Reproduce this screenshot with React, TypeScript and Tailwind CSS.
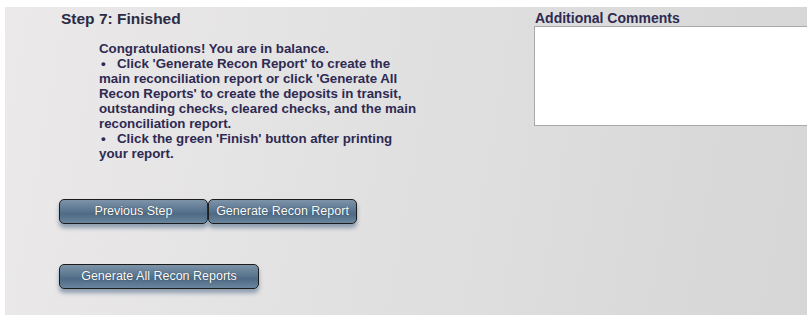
import React from 'react';

function NavButton({ label, width }: { label: string; width: string }) {
  return (
    <button
      className={`${width} h-[25px] rounded-[5px] border border-[#1c1c1c] bg-[linear-gradient(to_bottom,#7d93a8_0%,#5b7690_45%,#4e6a84_60%,#6a869e_100%)] text-[12.5px] text-white [text-shadow:0_0_1px_#1e2a38] shadow-[0_4px_4px_rgba(70,100,130,0.55)]`}
    >
      {label}
    </button>
  );
}

export default function App() {
  return (
    <div className="w-[807px] h-[317px] bg-white pt-[7px] pl-[5px] font-['Liberation_Sans',Arial,sans-serif]">
      <div className="flex h-[308px] bg-[linear-gradient(100deg,#ebe9ea_0%,#e3e2e3_40%,#d6d6d6_100%)] overflow-hidden">
        {/* left column */}
        <div className="w-[529px] shrink-0 pl-[56px]">
          <h2 className="mt-[3px] text-[15.5px] font-bold leading-[18px] text-[#2b2b45]">Step 7: Finished</h2>
          <div className="ml-[38px] mt-[13px] w-[320px] text-[13.3px] font-bold leading-[15px] text-[#2e2a52]">
            <p>Congratulations! You are in balance.</p>
            <p>
              <span className="inline-block w-[18px] pl-[2px]">•</span>Click 'Generate Recon Report' to create the main
              reconciliation report or click 'Generate All Recon Reports' to create the deposits in transit,
              outstanding checks, cleared checks, and the main reconciliation report.
            </p>
            <p>
              <span className="inline-block w-[18px] pl-[2px]">•</span>Click the green 'Finish' button after printing your
              report.
            </p>
          </div>
          <div className="-ml-[2px] mt-[38px] flex flex-col items-start gap-[40px]">
            <div className="flex">
              <NavButton label="Previous Step" width="w-[149px]" />
              <NavButton label="Generate Recon Report" width="w-[149px]" />
            </div>
            <NavButton label="Generate All Recon Reports" width="w-[200px]" />
          </div>
        </div>
        {/* right column */}
        <div className="pt-[3px]">
          <label className="block ml-[1px] text-[14px] font-bold leading-[16px] text-[#2e2a52]">Additional Comments</label>
          <textarea className="block h-[100px] w-[300px] border border-[#a9a9a9] bg-white resize-none" />
        </div>
      </div>
    </div>
  );
}
